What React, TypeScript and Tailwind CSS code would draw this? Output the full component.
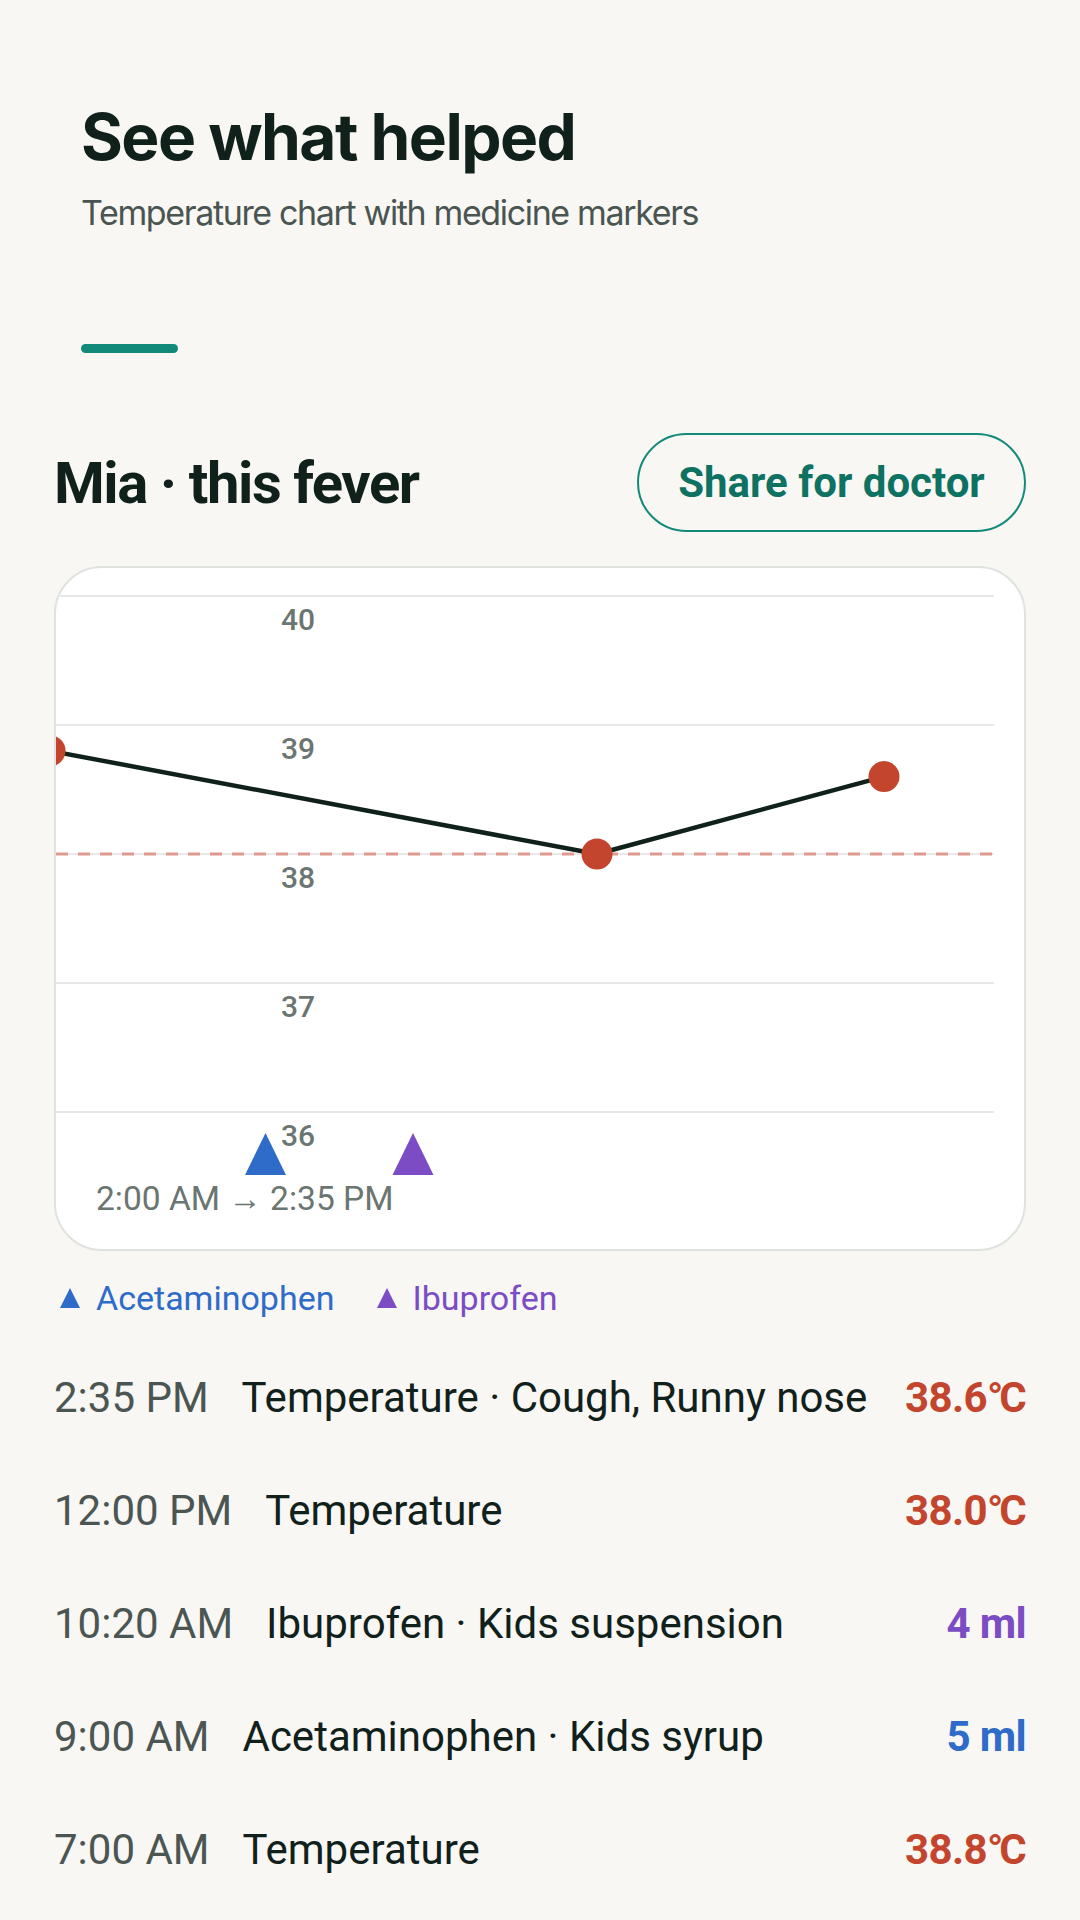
import React from 'react'

type Entry = {
  time: string
  label: string
  value: string
  unit?: string
  tone: 'temp' | 'ibu' | 'acet'
}

const entries: Entry[] = [
  { time: '2:35 PM', label: 'Temperature · Cough, Runny nose', value: '38.6', unit: 'C', tone: 'temp' },
  { time: '12:00 PM', label: 'Temperature', value: '38.0', unit: 'C', tone: 'temp' },
  { time: '10:20 AM', label: 'Ibuprofen · Kids suspension', value: '4 ml', tone: 'ibu' },
  { time: '9:00 AM', label: 'Acetaminophen · Kids syrup', value: '5 ml', tone: 'acet' },
  { time: '7:00 AM', label: 'Temperature', value: '38.8', unit: 'C', tone: 'temp' },
]

const toneClass = {
  temp: 'text-[#c4452d]',
  ibu: 'text-[#7b4cc4]',
  acet: 'text-[#2f6bc9]',
}

// x already placed on the chart's own time axis
const readings = [
  { x: -6, temp: 38.8 },
  { x: 541, temp: 38.0 },
  { x: 828, temp: 38.6 },
]
const doses = [
  { x: 209.5, color: '#2f6bc9' },
  { x: 357, color: '#7b4cc4' },
]

const yOf = (temp: number) => 28 + (40 - temp) * 129

const Triangle = ({ color, size }: { color: string; size: number }) => (
  <svg width={size} height={size} viewBox="0 0 20 20" className="shrink-0">
    <polygon points="10,0 20,20 0,20" fill={color} />
  </svg>
)

const FeverChart = () => {
  const ticks = [40, 39, 38, 37, 36]
  const path = readings.map((r, i) => `${i === 0 ? 'M' : 'L'}${r.x},${yOf(r.temp)}`).join(' ')
  return (
    <svg width="968" height="611" viewBox="0 0 968 611" className="block">
      {ticks.map((v) => (
        <g key={v}>
          <line x1="0" x2="938" y1={yOf(v)} y2={yOf(v)} stroke="#e6e9e7" strokeWidth="2" />
          <text
            x="225"
            y={yOf(v) + 34}
            fill="#6b7571"
            fontSize="30"
            fontWeight="500"
            fontFamily="Roboto, 'Liberation Sans', sans-serif"
          >
            {v}
          </text>
        </g>
      ))}
      <line
        x1="0"
        x2="938"
        y1={yOf(38)}
        y2={yOf(38)}
        stroke="#de9a8e"
        strokeWidth="3"
        strokeDasharray="12 10"
      />
      <path d={path} fill="none" stroke="#10201b" strokeWidth="4.5" strokeLinejoin="round" />
      {readings.map((r) => (
        <circle key={r.x} cx={r.x} cy={yOf(r.temp)} r="15.5" fill="#c4452d" />
      ))}
      {doses.map((d) => (
        <polygon
          key={d.x}
          points={`${d.x},565 ${d.x + 20.5},607 ${d.x - 20.5},607`}
          fill={d.color}
        />
      ))}
    </svg>
  )
}

export default function App() {
  return (
    <div className="min-h-[1920px] w-[1080px] bg-[#f8f7f3] font-['Roboto','Liberation_Sans',sans-serif] text-[#10201b]">
      <header className="px-[81px] pt-[98px]">
        <h1 className="font-['Inter','Liberation_Sans',sans-serif] text-[64px] leading-[77px] font-bold tracking-[-0.024em] text-[#10201b]">
          See what helped
        </h1>
        <p className="mt-[18px] font-['Inter','Liberation_Sans',sans-serif] text-[34px] leading-[40px] tracking-[-0.04em] text-[#4a5552]">
          Temperature chart with medicine markers
        </p>
        <div className="mt-[111px] h-[9px] w-[97px] rounded-full bg-[#128a7a]" />
      </header>

      <main className="px-[54px] pt-[80px]">
        <div className="flex items-center justify-between">
          <h2 className="text-[58px] leading-[68px] font-bold tracking-[-0.025em] text-[#10201b]">
            Mia · this fever
          </h2>
          <button className="flex h-[99px] w-[389px] items-center justify-center rounded-full border-[2.5px] border-[#138a7a] text-[42px] font-bold text-[#0e7263]">
            Share for doctor
          </button>
        </div>

        <section className="mt-[34px] overflow-hidden rounded-[48px] border-2 border-[#dfe3e0] bg-white">
          <FeverChart />
          <p className="pb-[30px] pl-[40px] text-[33.5px] leading-[40px] text-[#6b7571]">
            2:00 AM → 2:35 PM
          </p>
        </section>

        <div className="mt-[27px] flex items-center text-[34px] leading-[40px]">
          <div className="ml-[6px] flex items-center gap-[16px] text-[#2f6bc9]">
            <Triangle color="#2f6bc9" size={20} />
            <span>Acetaminophen</span>
          </div>
          <div className="ml-[42px] flex items-center gap-[16px] text-[#7b4cc4]">
            <Triangle color="#7b4cc4" size={20} />
            <span>Ibuprofen</span>
          </div>
        </div>

        <ul className="mt-[56px] flex flex-col gap-[65px]">
          {entries.map((e) => (
            <li key={e.time} className="flex items-center gap-[33px] text-[42px] leading-[48px]">
              <span className="shrink-0 text-[#4b5653]">{e.time}</span>
              <span className="min-w-0 flex-1 whitespace-nowrap text-[#10201b]">{e.label}</span>
              <span className={`shrink-0 font-bold tracking-[-0.015em] ${toneClass[e.tone]}`}>
                {e.value}
                {e.unit && (
                  <>
                    <span className="tracking-[-0.1em]">°</span>
                    {e.unit}
                  </>
                )}
              </span>
            </li>
          ))}
        </ul>
      </main>
    </div>
  )
}
